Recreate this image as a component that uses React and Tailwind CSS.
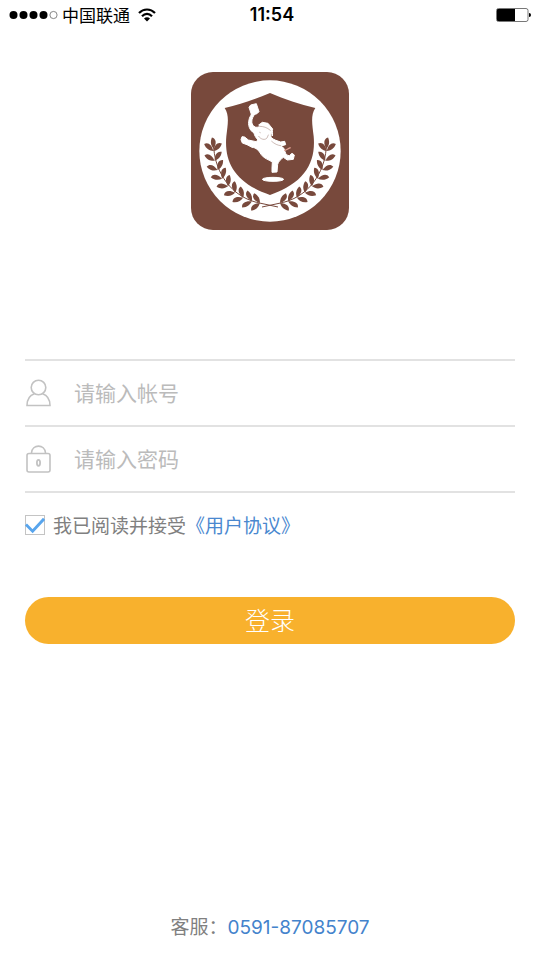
import { useState } from 'react';

const STEM_CENTER = { x: 256, y: 255 };
const LEAF_ANGLES = [180, 170, 160, 150, 140, 130, 120, 110, 101];

function stemPoint(angle) {
  const rad = (angle * Math.PI) / 180;
  const radius = 159 + (angle - 100) * 0.14;
  return {
    x: STEM_CENTER.x + radius * Math.cos(rad),
    y: STEM_CENTER.y + radius * Math.sin(rad),
  };
}

function LaurelBranch() {
  const leaf = 'M0 0C8 -7 20 -11 34 -4C30 9 16 10 0 0Z';
  return (
    <g fill="#78493c">
      <path d="M87 238C88 300 125 385 215 409L280 423" fill="none" stroke="#78493c" strokeWidth="3" />
      <path d={leaf} transform="translate(87 248) rotate(-92)" />
      {LEAF_ANGLES.map((angle) => {
        const p = stemPoint(angle);
        return (
          <g key={angle} transform={`translate(${p.x} ${p.y}) rotate(${angle + 90})`}>
            <path d={leaf} transform="rotate(-46)" />
            <path d={leaf} transform="rotate(42) scale(1 -1)" />
          </g>
        );
      })}
    </g>
  );
}

function Logo() {
  return (
    <svg viewBox="19 18 474 474" className="size-[158px]" role="img" aria-label="Logo">
      <rect x="19" y="18" width="474" height="474" rx="66" fill="#78493c" />
      <circle cx="256" cy="255" r="212" fill="#fff" />
      <path
        d="M256 81C300 100 345 115 392 126C377 149 383 176 387 211C394 289 361 351 256 387C151 351 118 289 125 211C129 176 135 149 120 126C167 115 212 100 256 81Z"
        fill="#78493c"
      />
      <LaurelBranch />
      <g transform="translate(512 0) scale(-1 1)">
        <LaurelBranch />
      </g>
      <g fill="#fff" stroke="#fff" strokeWidth="3" strokeLinejoin="round">
        <path d="M193 124L198 117L215 113L223 137L217 143L201 148Z" />
        <path d="M201 143L210 145C200 158 198 173 208 181C214 186 221 184 226 180L222 177L233 169L250 172L264 189C262 195 265 203 263 210C261 204 260 198 257 195L259 214C267 222 277 224 288 228L300 226L303 236L289 240C296 244 300 249 301 257C303 265 308 269 314 269L322 262L329 267L326 280L308 282L296 274C289 280 281 286 279 295L277 318L262 319L262 306L263 288C250 280 237 277 229 265C222 253 215 245 202 244L187 236L173 231L169 221L172 212L180 213L191 222L214 227L220 222C213 215 209 207 208 201C194 193 189 176 193 162C194 154 198 150 201 143Z" />
        <ellipse cx="265" cy="340" rx="32" ry="6" />
      </g>
      <g fill="none" stroke="#b39a92" strokeWidth="2" strokeLinecap="round">
        <path d="M225 181C236 181 247 184 257 193" />
        <path d="M222 211C229 221 241 223 247 216L251 207" />
        <path d="M225 199L227 200M261 226C270 234 279 238 288 239" />
      </g>
      <path d="M298 253C308 253 309 247 318 245" fill="none" stroke="#e6a496" strokeWidth="4" />
    </svg>
  );
}

function StatusBar() {
  return (
    <header className="grid h-[30px] grid-cols-3 items-center px-2 text-black">
      <div className="flex items-center">
        <svg viewBox="0 0 50 10" className="h-[10px] w-[50px]" aria-hidden="true">
          <circle cx="5.5" cy="5" r="4" />
          <circle cx="15.5" cy="5" r="4" />
          <circle cx="25.5" cy="5" r="4" />
          <circle cx="35.5" cy="5" r="4" />
          <circle cx="45.5" cy="5" r="3.6" fill="none" stroke="#555" strokeWidth="0.7" />
        </svg>
        <span className="ml-1 text-[17px] leading-6 whitespace-nowrap">中国联通</span>
        <svg viewBox="0 0 18 14" className="ml-2 h-[14px] w-[18px]" aria-hidden="true">
          <g fill="none" stroke="#000" strokeWidth="2.2">
            <path d="M1 5C5.5 0.3 12.5 0.3 17 5" />
            <path d="M4 8.2C7 5.1 11 5.1 14 8.2" />
          </g>
          <path d="M9 13.5L6 10.5C7.7 8.8 10.3 8.8 12 10.5Z" />
        </svg>
      </div>
      <time className="pl-1 text-center font-[Inter] text-[18px] leading-6 font-semibold">11:54</time>
      <svg viewBox="0 0 36 14" className="h-[14px] w-[36px] justify-self-end" aria-hidden="true">
        <rect x="0.5" y="0.5" width="31.5" height="13" rx="2" fill="#fff" stroke="#555" strokeWidth="0.8" />
        <path d="M2 1H19V13H2Q1 13 1 12V2Q1 1 2 1Z" />
        <path d="M33 5Q35 5 35 7Q35 9 33 9Z" />
      </svg>
    </header>
  );
}

function UserIcon() {
  return (
    <svg viewBox="0 0 26 28" className="h-7 w-[26px]" fill="none" stroke="#c2c2c2" strokeWidth="1.6" aria-hidden="true">
      <circle cx="13.5" cy="8.5" r="7.3" />
      <path d="M9.5 14.8C4.5 16.5 2 20.5 2 26.5H25C25 20.5 22.5 16.5 17.5 14.8" />
    </svg>
  );
}

function LockIcon() {
  return (
    <svg viewBox="0 0 26 28" className="h-7 w-[26px]" fill="none" stroke="#c2c2c2" strokeWidth="1.6" aria-hidden="true">
      <rect x="2" y="8.5" width="23" height="18.5" rx="2" />
      <path d="M6.5 8C7 -1.2 20 -1.2 20.5 8" />
      <ellipse cx="13.5" cy="17.8" rx="1.6" ry="3" strokeWidth="1.8" />
    </svg>
  );
}

function Field({ id, label, type, icon }) {
  return (
    <div className="flex h-[66px] items-center border-b-2 border-[#e2e2e2]">
      <label htmlFor={id} aria-label={label}>
        {icon}
      </label>
      <input
        id={id}
        type={type}
        placeholder={label}
        className="ml-[23px] min-w-0 flex-1 bg-transparent pb-0.5 text-[21px] leading-8 text-gray-700 outline-none placeholder:text-[#bbb]"
      />
    </div>
  );
}

export default function App() {
  const [accepted, setAccepted] = useState(true);

  return (
    <div className="flex min-h-screen flex-col bg-white font-['Noto_Sans_CJK_SC',sans-serif]">
      <StatusBar />
      <main className="flex flex-1 flex-col px-[25px]">
        <div className="mt-[42px] flex justify-center">
          <Logo />
        </div>
        <form className="mt-[129px]" onSubmit={(event) => event.preventDefault()}>
          <div className="border-t-2 border-[#e2e2e2]">
            <Field id="account" label="请输入帐号" type="text" icon={<UserIcon />} />
            <Field id="password" label="请输入密码" type="password" icon={<LockIcon />} />
          </div>
          <div className="mt-[18px] flex h-7 items-center text-[19px] leading-7 text-[#808080]">
            <label className="flex items-center">
              <span className="grid size-5 place-items-center">
                <input
                  type="checkbox"
                  checked={accepted}
                  onChange={(event) => setAccepted(event.target.checked)}
                  className="peer col-start-1 row-start-1 size-5 appearance-none border border-[#c4c4c4] bg-white"
                />
                <svg
                  viewBox="0 0 21 21"
                  className="pointer-events-none invisible col-start-1 row-start-1 size-5 peer-checked:visible"
                  fill="none"
                  stroke="#58a5ed"
                  strokeWidth="3"
                  aria-hidden="true"
                >
                  <path d="M1 10L8 17L20 4" />
                </svg>
              </span>
              <span className="ml-2">我已阅读并接受</span>
            </label>
            <a href="#agreement" className="text-[#4a88cf]">
              《用户协议》
            </a>
          </div>
          <button
            type="submit"
            className="mt-[58px] flex h-[47px] w-full justify-center rounded-full bg-[#f8b12d] pt-1 text-[25px] leading-9 font-light text-white"
          >
            登录
          </button>
        </form>
        <footer className="mt-auto mb-[18px] flex items-baseline justify-center text-[19px] leading-7 text-[#808080]">
          <span>客服：</span>
          <a href="tel:0591-87085707" className="font-[Inter] text-[#4483cc]">
            0591-87085707
          </a>
        </footer>
      </main>
    </div>
  );
}
